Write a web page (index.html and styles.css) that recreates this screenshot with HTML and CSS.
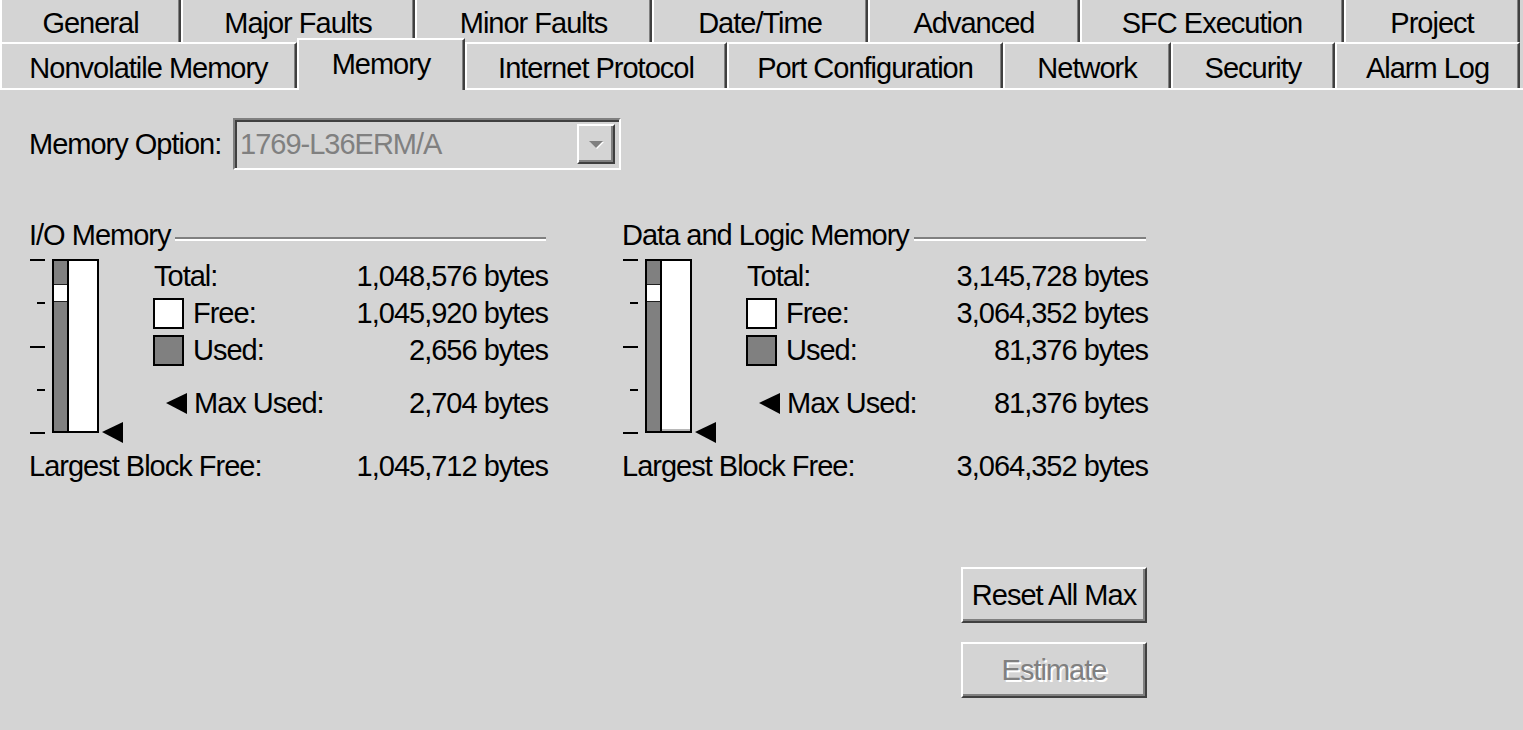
FILE: index.html
```html
<!DOCTYPE html>
<html lang="en">
<head>
  <meta charset="UTF-8">
  <title>Controller Properties - Memory</title>
  <link rel="stylesheet" href="styles.css">
</head>
<body>

  <!-- tab strip, two rows -->
  <div class="tabs">
    <div class="tab-row row-back">
      <div class="tab" style="width:181px">General</div>
      <div class="tab" style="width:234px">Major Faults</div>
      <div class="tab" style="width:237px">Minor Faults</div>
      <div class="tab" style="width:216px">Date/Time</div>
      <div class="tab" style="width:212px">Advanced</div>
      <div class="tab" style="width:264px">SFC Execution</div>
      <div class="tab" style="width:176px">Project</div>
    </div>
    <div class="tab-row row-front">
      <div class="tab" style="width:297px">Nonvolatile Memory</div>
      <div class="tab active" style="width:168px">Memory</div>
      <div class="tab" style="width:262px">Internet Protocol</div>
      <div class="tab" style="width:276px">Port Configuration</div>
      <div class="tab" style="width:168px">Network</div>
      <div class="tab" style="width:164px">Security</div>
      <div class="tab" style="width:185px">Alarm Log</div>
    </div>
  </div>

  <div class="panel">

    <div class="option-row">
      <div class="option-label">Memory Option:</div>
      <div class="combo">
        <span class="combo-text">1769-L36ERM/A</span>
        <span class="combo-btn"><span class="combo-arrow"></span></span>
      </div>
    </div>

    <div class="groups">

      <!-- I/O memory -->
      <div class="group group-io">
        <div class="group-head">
          <span>I/O Memory</span>
          <span class="group-line"></span>
        </div>
        <div class="group-body">
          <div class="gauge">
            <div class="ticks">
              <span class="tick"></span>
              <span class="tick short"></span>
              <span class="tick"></span>
              <span class="tick short"></span>
              <span class="tick"></span>
            </div>
            <div class="bars">
              <div class="used-col"><span class="seg-free"></span></div>
              <div class="free-col"></div>
            </div>
            <span class="mark-big"></span>
          </div>
          <div class="legend">
            <div class="legend-row">
              <span class="legend-label">Total:</span>
              <span class="value">1,048,576 bytes</span>
            </div>
            <div class="legend-row">
              <span class="legend-label"><span class="swatch white"></span>Free:</span>
              <span class="value">1,045,920 bytes</span>
            </div>
            <div class="legend-row">
              <span class="legend-label"><span class="swatch grey"></span>Used:</span>
              <span class="value">2,656 bytes</span>
            </div>
            <div class="legend-row max">
              <span class="legend-label"><span class="mark-small"></span>Max Used:</span>
              <span class="value">2,704 bytes</span>
            </div>
          </div>
        </div>
        <div class="largest">
          <span>Largest Block Free:</span>
          <span>1,045,712 bytes</span>
        </div>
      </div>

      <!-- data and logic memory -->
      <div class="group group-data">
        <div class="group-head">
          <span>Data and Logic Memory</span>
          <span class="group-line"></span>
        </div>
        <div class="group-body">
          <div class="gauge">
            <div class="ticks">
              <span class="tick"></span>
              <span class="tick short"></span>
              <span class="tick"></span>
              <span class="tick short"></span>
              <span class="tick"></span>
            </div>
            <div class="bars">
              <div class="used-col"><span class="seg-free"></span></div>
              <div class="free-col"><span class="used-strip"></span></div>
            </div>
            <span class="mark-big"></span>
          </div>
          <div class="legend">
            <div class="legend-row">
              <span class="legend-label">Total:</span>
              <span class="value">3,145,728 bytes</span>
            </div>
            <div class="legend-row">
              <span class="legend-label"><span class="swatch white"></span>Free:</span>
              <span class="value">3,064,352 bytes</span>
            </div>
            <div class="legend-row">
              <span class="legend-label"><span class="swatch grey"></span>Used:</span>
              <span class="value">81,376 bytes</span>
            </div>
            <div class="legend-row max">
              <span class="legend-label"><span class="mark-small"></span>Max Used:</span>
              <span class="value">81,376 bytes</span>
            </div>
          </div>
        </div>
        <div class="largest">
          <span>Largest Block Free:</span>
          <span>3,064,352 bytes</span>
        </div>
      </div>

    </div>

    <div class="actions">
      <button class="btn">Reset All Max</button>
      <button class="btn" disabled>Estimate</button>
    </div>

  </div>

</body>
</html>
```
FILE: styles.css
```css
body {
  margin: 0;
  width: 1523px;
  height: 730px;
  overflow: hidden;
  background-color: #d4d4d4;
  color: #000;
  font-family: 'Liberation Sans', Arial, sans-serif;
  font-size: 29px;
  line-height: 30px;
  letter-spacing: -1px;
}

/* tabs */
.tabs {
  width: 1520px;
}

.tab-row {
  display: flex;
}

.tab {
  box-sizing: border-box;
  text-align: center;
  white-space: nowrap;
  border-left: 2px solid #fff;
  border-right: 2px solid #404040;
  box-shadow: inset -1px 0 #808080;
  background-color: #d4d4d4;
}

.row-back .tab {
  height: 42px;
  padding-top: 8px;
}

.row-front {
  height: 46px;
}

.row-front .tab {
  height: 46px;
  padding-top: 9px;
  border-top: 2px solid #fff;
}

.row-front .tab.active {
  height: 52px;
  margin-top: -4px;
  position: relative;
  z-index: 1;
}

/* panel */
.panel {
  box-sizing: border-box;
  height: 642px;
  border-top: 2px solid #fff;
  padding: 28px 0 0 29px;
}

.option-row {
  display: flex;
  align-items: center;
}

.option-label {
  width: 204px;
}

.combo {
  box-sizing: border-box;
  width: 388px;
  height: 52px;
  border: 2px solid;
  border-color: #808080 #fff #fff #808080;
  box-shadow: inset 2px 2px #404040;
  display: flex;
  align-items: center;
  justify-content: space-between;
  padding: 0 4px 0 5px;
}

.combo-text {
  color: #808080;
}

.combo-btn {
  box-sizing: border-box;
  width: 38px;
  height: 40px;
  border: 2px solid;
  border-color: #fff #404040 #404040 #fff;
  box-shadow: inset -2px -2px #808080;
  display: flex;
  align-items: center;
  justify-content: center;
}

.combo-arrow {
  width: 0;
  height: 0;
  border-top: 7px solid #808080;
  border-left: 7px solid transparent;
  border-right: 7px solid transparent;
  filter: drop-shadow(1px 1px 0 #fff);
}

/* memory groups */
.groups {
  width: 1119px;
  margin-top: 50px;
  display: flex;
  justify-content: space-between;
}

.group-io {
  width: 519px;
}

.group-data {
  width: 526px;
}

.group-head {
  display: flex;
  gap: 5px;
}

.group-line {
  flex: 1;
  height: 0;
  margin: 17px 2px 0 0;
  border-top: 2px solid #808080;
  border-bottom: 2px solid #fff;
}

.group-body {
  display: flex;
  margin-top: 9px;
}

.gauge {
  display: flex;
  align-items: flex-start;
  margin-left: 1px;
}

.ticks {
  width: 15px;
  height: 175px;
  display: flex;
  flex-direction: column;
  justify-content: space-between;
  align-items: flex-end;
}

.tick {
  width: 15px;
  height: 2px;
  background-color: #000;
}

.tick.short {
  width: 8px;
}

.bars {
  box-sizing: border-box;
  width: 47px;
  height: 174px;
  margin-left: 7px;
  border: 2px solid #000;
  display: flex;
}

.used-col {
  width: 13px;
  border-right: 2px solid #000;
  background-color: #808080;
  display: flex;
  flex-direction: column;
}

.seg-free {
  height: 16px;
  margin-top: 23px;
  background-color: #fff;
  border-top: 1px solid #202020;
  border-bottom: 1px solid #202020;
}

.free-col {
  flex: 1;
  background-color: #fff;
  display: flex;
  flex-direction: column;
  justify-content: flex-end;
}

.used-strip {
  height: 2px;
  background-color: #b8b8b8;
}

.mark-big {
  width: 0;
  height: 0;
  margin: 163px 0 0 3px;
  border-right: 21px solid #000;
  border-top: 10px solid transparent;
  border-bottom: 11px solid transparent;
}

.legend {
  flex: 1;
  margin: 2px 0 0 30px;
  display: flex;
  flex-direction: column;
  gap: 7px;
}

.legend-row {
  height: 30px;
  display: flex;
  align-items: center;
  justify-content: space-between;
}

.legend-row.max {
  margin-top: 16px;
}

.legend-label {
  display: flex;
  align-items: center;
  padding-left: 1px;
}

.swatch {
  box-sizing: border-box;
  width: 31px;
  height: 31px;
  margin: 0 9px 0 -1px;
  border: 2px solid #000;
}

.swatch.white {
  background-color: #fff;
}

.swatch.grey {
  background-color: #808080;
}

.mark-small {
  width: 0;
  height: 0;
  margin: 0 7px 0 12px;
  border-right: 21px solid #000;
  border-top: 10px solid transparent;
  border-bottom: 11px solid transparent;
}

.largest {
  margin-top: 8px;
  display: flex;
  justify-content: space-between;
}

/* buttons */
.actions {
  width: 1118px;
  margin-top: 86px;
  display: flex;
  flex-direction: column;
  align-items: flex-end;
  gap: 19px;
}

.btn {
  box-sizing: border-box;
  width: 186px;
  height: 56px;
  padding: 0;
  font: inherit;
  letter-spacing: inherit;
  color: #000;
  background-color: #d4d4d4;
  border: 2px solid;
  border-color: #fff #404040 #404040 #fff;
  box-shadow: inset -2px -2px #808080;
}

.btn:disabled {
  color: #808080;
  text-shadow: 2px 2px 0 #fff;
}
```
